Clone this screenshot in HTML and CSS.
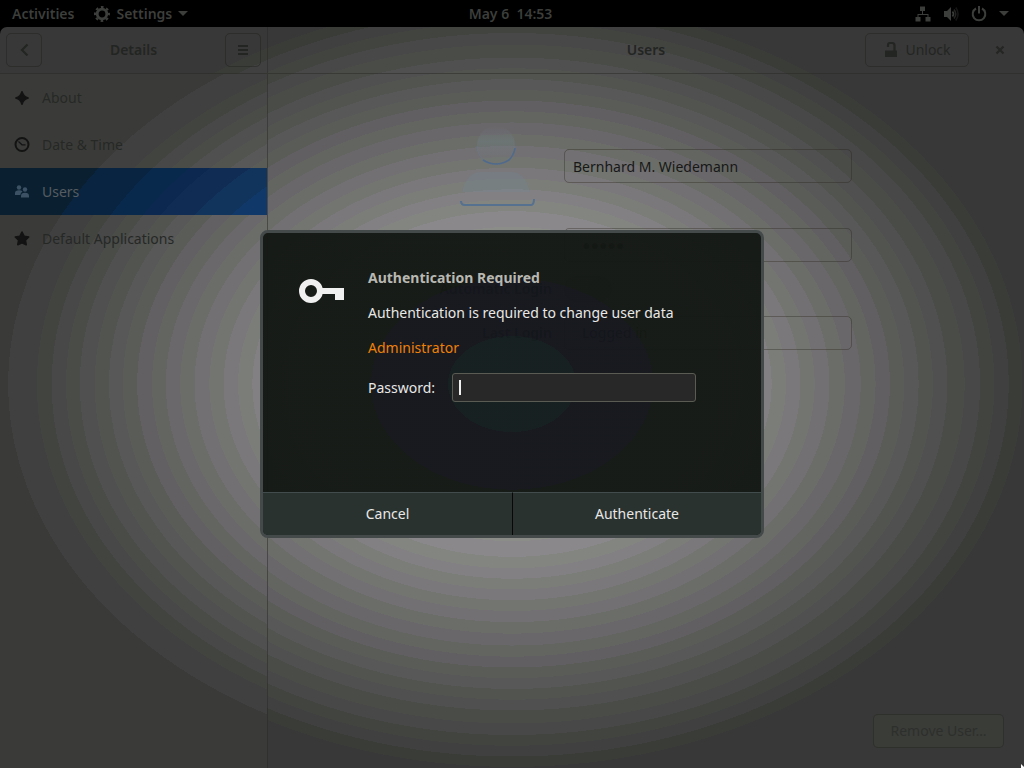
FILE: index.html
```
<!DOCTYPE html>
<html lang="en">
<head>
<meta charset="utf-8">
<title>Users</title>
<link rel="stylesheet" href="styles.css">
</head>
<body>
<div class="desktop">
  <header class="topbar">
    <div class="topbar-left">
      <button class="top-item" type="button">Activities</button>
      <button class="top-item app-menu" type="button">
        <svg width="16" height="16" viewBox="0 0 16 16"><g fill="none" stroke="currentColor"><circle cx="8" cy="8" r="4.800" stroke-width="2.800"/><circle cx="8" cy="8" r="7" stroke-width="2" stroke-dasharray="2.700 2.798" stroke-dashoffset="1.350"/></g></svg>
        <span>Settings</span>
        <svg width="10" height="6" viewBox="0 0 10 6"><path d="M0 0h10L5 5z" fill="currentColor"/></svg>
      </button>
    </div>
    <button class="top-item clock" type="button">May 6&nbsp; 14:53</button>
    <button class="top-item tray" type="button" aria-label="System">
      <svg width="16" height="16" viewBox="0 0 16 16"><g fill="currentColor"><path d="M5 0.500h5v4.500H5zM0.500 11h5v4.500h-5zM10.500 11h5v4.500h-5z"/><path d="M7 5h1v3h5.500v3h-1V9h-9v2h-1V8H7z"/></g></svg>
      <svg width="16" height="16" viewBox="0 0 16 16"><path d="M1 5h3l4-4v14l-4-4H1z" fill="currentColor"/><g fill="none" stroke="currentColor" stroke-width="1.600"><path d="M9.500 5.500q2 2.500 0 5"/><path d="M11 3.500q3.500 4.500 0 9" opacity=".6"/><path d="M12.800 1.500q4.500 6.500 0 13" opacity=".35"/></g></svg>
      <svg width="16" height="16" viewBox="0 0 16 16"><path d="M5 2.500a6.300 6.300 0 1 0 6 0M8 0v7.500" fill="none" stroke="currentColor" stroke-width="2"/></svg>
      <svg width="10" height="6" viewBox="0 0 10 6"><path d="M0 0h10L5 5z" fill="currentColor"/></svg>
    </button>
  </header>

  <main class="window">
    <section class="side">
      <div class="headerbar side-header">
        <button class="btn icon-btn" type="button" aria-label="Back"><svg width="16" height="16" viewBox="0 0 16 16"><path d="M11.500 2.500L6 8l5.500 5.500" fill="none" stroke="currentColor" stroke-width="2.200"/></svg></button>
        <h2 class="title">Details</h2>
        <button class="btn icon-btn" type="button" aria-label="Menu"><svg width="16" height="16" viewBox="0 0 16 16"><path d="M3 3h10v2H3zM3 7h10v2H3zM3 11h10v2H3z" fill="currentColor"/></svg></button>
      </div>
      <nav class="nav">
        <a class="row" href="#about"><svg width="16" height="16" viewBox="0 0 16 16"><path d="M8 1.500Q9 7 14.500 8 9 9 8 14.500 7 9 1.500 8 7 7 8 1.500z" fill="currentColor" stroke="currentColor" stroke-width="1.600"/></svg>About</a>
        <a class="row" href="#date"><svg width="16" height="16" viewBox="0 0 16 16"><circle cx="8" cy="7.500" r="6.500" fill="none" stroke="currentColor" stroke-width="2"/><path d="M4.500 4.500L8 7.800h3.500" fill="none" stroke="currentColor" stroke-width="1.200"/></svg>Date &amp; Time</a>
        <a class="row selected" href="#users"><svg width="16" height="16" viewBox="0 0 16 16"><g fill="currentColor"><circle cx="5" cy="3.500" r="2.200"/><circle cx="11" cy="5.500" r="2.200"/><path d="M1 11V9q0-2.800 4-2.800 2.500 0 3.500 1.300Q6.500 8.500 6.300 11z"/><path d="M7 13.500V12q0-3.200 4-3.200t4 3.200v1.500z"/></g></svg>Users</a>
        <a class="row" href="#apps"><svg width="16" height="16" viewBox="0 0 16 16"><path d="M8 1l2.200 4.300 4.500.7-3.300 3.300.8 4.400L8 11.700l-4.200 2 .8-4.400L1.300 6l4.500-.7z" fill="currentColor" stroke="currentColor" stroke-width="1.600" stroke-linejoin="round"/></svg>Default Applications</a>
      </nav>
    </section>

    <section class="panel">
      <div class="headerbar panel-header">
        <h1 class="title">Users</h1>
        <div class="header-actions">
          <button class="btn unlock" type="button"><svg width="16" height="16" viewBox="0 0 16 16"><path d="M2 8.500h12v6.500H2z" fill="currentColor"/><path d="M5 5V3q0-2 2-2h2q2.500 0 2.500 2.500V9" fill="none" stroke="currentColor" stroke-width="2.200"/></svg>Unlock</button>
          <button class="close" type="button" aria-label="Close"><svg width="16" height="16" viewBox="0 0 16 16"><path d="M4.500 4.500l7 7M11.500 4.500l-7 7" stroke="currentColor" stroke-width="2.200"/></svg></button>
        </div>
      </div>
      <div class="content">
        <form class="user-form">
          <svg class="avatar" width="80" height="80" viewBox="0 0 80 80">
            <defs><linearGradient id="fade" x1="0" y1="0" x2="0" y2="1"><stop offset="0" stop-color="#70808a" stop-opacity="0"/><stop offset=".4" stop-color="#70808a" stop-opacity=".35"/><stop offset="1" stop-color="#70808a" stop-opacity="0"/></linearGradient></defs>
            <circle cx="40" cy="19" r="19" fill="url(#fade)"/>
            <path d="M21 20a19 18.500 0 0 0 38 0" fill="none" stroke="#6b7888" opacity=".8"/>
            <path d="M27 34q13 8 26 0 5-5 6-12" fill="none" stroke="#506a8c" stroke-width="1.600"/>
            <path d="M6 66Q11 46 24 46h32q13 0 18 20z" fill="#70889a" opacity=".25"/>
            <path d="M5 75q0 4 4 4h66q3 0 3-6" fill="none" stroke="#56708f" stroke-width="2"/>
          </svg>
          <input class="field" type="text" aria-label="Full name" value="Bernhard M. Wiedemann">
          <button class="field value wide" type="button" aria-label="Password">●●●●●</button>
          <label class="label" for="auto">Automatic Login</label>
          <input class="switch" id="auto" type="checkbox">
          <label class="label" for="last">Last Login</label>
          <button class="field value" id="last" type="button">Logged in</button>
        </form>
        <button class="btn remove" type="button">Remove User…</button>
      </div>
    </section>
  </main>

  <div class="modal">
    <form class="dialog" role="dialog" aria-labelledby="dlg-title">
      <div class="dialog-body">
        <svg class="key" width="46" height="46" viewBox="0 0 46 46"><circle cx="12" cy="23" r="9" fill="none" stroke="#f0f0f0" stroke-width="6"/><path d="M22 20h23v12h-9v-6H22z" fill="#f0f0f0"/></svg>
        <div class="dialog-text">
          <h3 class="dialog-title" id="dlg-title">Authentication Required</h3>
          <p class="dialog-line">Authentication is required to change user data</p>
          <p class="dialog-line admin">Administrator</p>
          <div class="pw-row"><label for="auth">Password:</label><span class="pw-box"><input class="pw-input" id="auth" type="password"><i class="caret"></i></span></div>
        </div>
      </div>
      <div class="dialog-actions">
        <button class="dialog-btn" type="button">Cancel</button>
        <button class="dialog-btn" type="submit">Authenticate</button>
      </div>
    </form>
  </div>
  <svg class="pointer" width="3" height="4" viewBox="0 0 3 4"><path d="M0 0l3 3v1H0z" fill="#fff"/></svg>
</div>
</body>
</html>
```
FILE: styles.css
```
:root {
  --shade: radial-gradient(farthest-side at center,
    #8a8d88 40.900%, #8a888a 40.900% 45%, #828580 45% 48%, #828082 48% 50.700%,
    #7a7d78 50.700% 53.500%, #7a787a 53.500% 56.300%, #727570 56.300% 59.100%,
    #727072 59.100% 62%, #6a6d68 62% 65%, #6a676a 65% 68.100%, #626560 68.100% 71%,
    #625f62 71% 73.800%, #5a5c58 73.800% 76.600%, #585858 76.600% 79.400%,
    #525450 79.400% 82.200%, #505050 82.200% 85%, #4a4c48 85% 88.400%,
    #484848 88.400% 91.400%, #424440 91.400% 94.200%, #404040 94.200% 97%,
    #3a3c38 97% 99.700%, #383838 99.700%);
  --side-shade: radial-gradient(farthest-side at center,
    #828580 48%, #828082 48% 50.700%, #7a7d78 50.700% 53.500%, #7a787a 53.500% 56.300%,
    #727570 56.300% 59.100%, #727072 59.100% 62%, #6a6d68 62% 64.800%,
    #6a686a 64.800% 67.600%, #626560 67.600% 70.300%, #626062 70.300% 73.200%,
    #5a5c58 73.200% 76%, #585858 76% 78.700%, #525450 78.700% 81.500%,
    #505050 81.500% 84.400%, #4a4c48 84.400% 87.100%, #484848 87.100% 89.900%,
    #424440 89.900% 92.800%, #404040 92.800% 98.400%, #3a3b38 98.400%);
  --selected-shade: radial-gradient(farthest-side at center,
    #103868 70.300%, #10345c 70.300% 76%, #102c54 76% 81.500%, #0c2850 81.500% 84.400%,
    #08284c 84.400% 89.900%, #082440 89.900% 98.400%, #0a2030 98.400%);
}
* { box-sizing: border-box; }
body { margin: 0; font: 14px/20px "Noto Sans", sans-serif; color: #262826; background: #000; }
button, input { font: inherit; color: inherit; }
button { border: 0; background: none; padding: 0; }
svg { flex: none; display: block; }
.desktop { position: relative; min-height: 100vh; display: flex; flex-direction: column; overflow: hidden; }
.topbar { height: 27px; padding: 0 15px 0 12px; display: grid; grid-template-columns: 1fr auto 1fr; align-items: center; color: #3c3e3b; font-weight: 600; }
.topbar-left { display: flex; gap: 20px; }
.top-item { display: flex; align-items: center; }
.app-menu { gap: 6px; }
.tray { justify-self: end; gap: 12px; }
.window { flex: 1; display: flex; background: var(--shade) fixed; border-radius: 7px 7px 0 0; overflow: hidden; }
.side { width: 268px; flex: none; display: flex; flex-direction: column; border-right: 1px solid rgba(40, 40, 36, .5); }
.headerbar { height: 47px; border-bottom: 1px solid rgba(40, 40, 36, .5); padding: 0 6px; }
.side-header { display: flex; align-items: center; justify-content: space-between; }
.title { margin: 0; font-size: 14px; font-weight: 600; color: #232522; }
.btn { display: flex; align-items: center; justify-content: center; height: 34px; border: 1px solid rgba(30, 30, 26, .4); border-radius: 5px; color: #232522; }
.icon-btn { width: 36px; }
.nav { flex: 1; display: flex; flex-direction: column; background: var(--side-shade) fixed; }
.row { display: flex; align-items: center; gap: 12px; height: 47px; padding: 0 14px; text-decoration: none; color: #262826; }
.row svg { color: #121312; }
.selected { background: var(--selected-shade) fixed; color: #565c62; }
.selected svg { color: #3c5264; }
.panel { flex: 1; display: flex; flex-direction: column; }
.panel-header { display: grid; grid-template-columns: 1fr auto 1fr; align-items: center; padding: 0 16px; }
.panel-header .title { grid-column: 2; }
.header-actions { display: flex; justify-content: flex-end; align-items: center; gap: 23px; }
.unlock { width: 104px; gap: 6px; }
.close { color: #242623; }
.content { flex: 1; display: flex; flex-direction: column; justify-content: space-between; padding: 35px 20px 20px; }
.user-form { display: grid; grid-template-columns: 112px 288px; column-gap: 12px; justify-content: center; align-items: center; grid-template-rows: 114px 44px 44px 44px; }
.avatar { justify-self: center; }
.label { justify-self: end; font-weight: 600; white-space: nowrap; }
.field { height: 34px; width: 100%; padding: 0 8px; border: 1px solid rgba(40, 34, 26, .35); border-radius: 5px; background: none; color: #171817; }
.value { padding: 0 17px; text-align: left; }
.wide { grid-column: 2; }
.switch { appearance: none; margin: 0; width: 48px; height: 26px; border-radius: 13px; border: 1px solid #6a6c68; background: radial-gradient(circle at 35px 12px, #707375 11px, #7c7e7c 12px); }
.remove { align-self: flex-end; width: 131px; background: #3a3c38; color: #2d2f2c; }
.modal { position: absolute; inset: 0; display: flex; align-items: center; justify-content: center; }
.dialog { width: 504px; border: 3px solid #444a4a; border-radius: 8px; overflow: hidden; background: radial-gradient(farthest-side at center, rgba(20, 29, 30, .97) 12.500%, rgba(20, 22, 28, .97) 12.500% 27.500%, rgba(20, 24, 20, .97) 27.500%) fixed; color: #e8e8e6; }
.dialog-body { display: flex; gap: 23px; padding: 35px 65px 0 36px; height: 259px; }
.dialog-text { flex: 1; display: flex; flex-direction: column; gap: 15px; }
.dialog-title, .dialog-line { margin: 0; font-size: 14px; }
.dialog-title { font-weight: 700; color: #b8b8b2; }
.admin { color: #f08008; }
.pw-row { display: flex; align-items: center; justify-content: space-between; }
.pw-box { position: relative; width: 244px; height: 29px; }
.pw-input { width: 100%; height: 100%; border: 1px solid #5a5c54; border-radius: 3px; background: #282828; padding: 0 8px; }
.caret { position: absolute; left: 7px; top: 7px; width: 2px; height: 15px; background: #f0f0f0; }
.dialog-actions { display: grid; grid-template-columns: 1fr 1fr; }
.dialog-btn { height: 43px; background: #2a3230; border-top: 1px solid #424c4c; }
.dialog-btn + .dialog-btn { border-left: 1px solid #080808; }
.pointer { position: absolute; right: 0; bottom: 0; }
```
